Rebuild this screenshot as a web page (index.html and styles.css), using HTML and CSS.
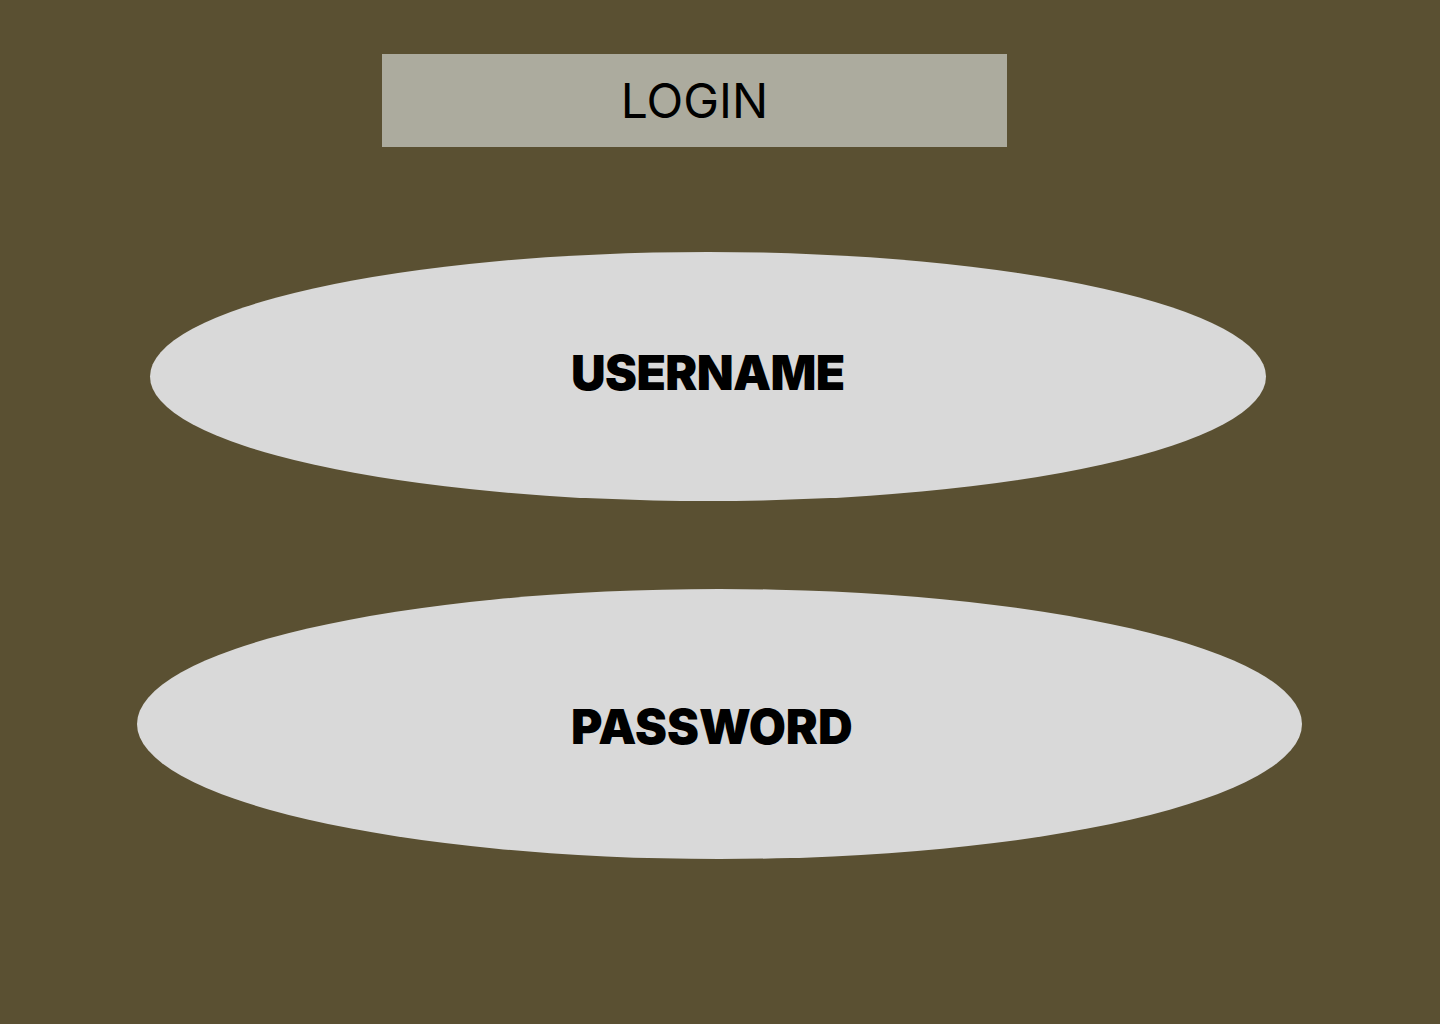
FILE: index.html
```html
<!DOCTYPE html>
<html lang="en">
<head>
  <meta charset="UTF-8">
  <meta name="viewport" content="width=device-width, initial-scale=1.0">
  <title>Login</title>
  <link rel="stylesheet" href="styles.css">
</head>
<body>
  <main class="login">
    <!-- title bar -->
    <div class="login-title">LOGIN</div>

    <!-- fields -->
    <div class="field field-user">USERNAME</div>
    <div class="field field-pass">PASSWORD</div>
  </main>
</body>
</html>
```

FILE: styles.css
```css
* {
  margin: 0;
  padding: 0;
  box-sizing: border-box;
}
body {
  background: #5a5032;
  font-family: 'Inter', 'Liberation Sans', sans-serif;
  color: #000;
  min-height: 1024px;
}

.login {
  display: flex;
  flex-direction: column;
  align-items: flex-start;
  padding-top: 54px;
}

/* title bar */
.login-title {
  margin-left: 382px;
  width: 625px;
  height: 93px;
  background: #acab9e;
  display: flex;
  align-items: center;
  justify-content: center;
  font-size: 48px;
  font-weight: 400;
}

/* oval fields */
.field {
  background: #d9d9d9;
  border-radius: 50%;
  display: flex;
  align-items: center;
  font-size: 48px;
  font-weight: 900;
  line-height: 1;
}
.field-user {
  margin-top: 105px;
  margin-left: 150px;
  width: 1116px;
  height: 249px;
  padding-left: 421px;
  padding-bottom: 8px;
  letter-spacing: -0.6px;
}
.field-pass {
  margin-top: 88px;
  margin-left: 137px;
  width: 1165px;
  height: 270px;
  padding-left: 434px;
  padding-top: 6px;
}
```
